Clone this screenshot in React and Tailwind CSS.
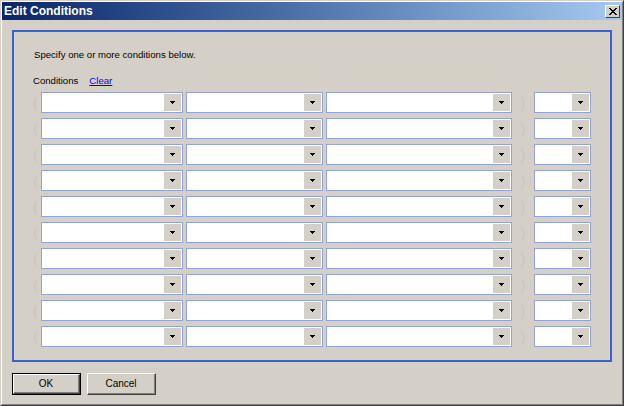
import React from "react";

const font = { fontFamily: '"Liberation Sans", Arial, sans-serif' };

function Arrow() {
  return (
    <svg width="5" height="3" viewBox="0 0 5 3" shapeRendering="crispEdges">
      <rect x="0" y="0" width="5" height="1" fill="#000" />
      <rect x="1" y="1" width="3" height="1" fill="#000" />
      <rect x="2" y="2" width="1" height="1" fill="#000" />
    </svg>
  );
}

function Combo({ w }) {
  return (
    <div className={`${w} h-[21px] border border-[#93a3d3] bg-white flex justify-end p-[1px]`}>
      <div className="w-[17px] h-full bg-[#d4d0c8] flex items-center justify-center">
        <Arrow />
      </div>
    </div>
  );
}

function Row() {
  return (
    <div className="flex items-center h-[21px]">
      <span className="w-[27px] pr-[3px] text-right text-[14px] leading-none text-[#c9c5bd]">(</span>
      <Combo w="w-[142px]" />
      <div className="w-[3px]" />
      <Combo w="w-[137px]" />
      <div className="w-[3px]" />
      <Combo w="w-[186px]" />
      <span className="w-[22px] text-center text-[14px] leading-none text-[#c9c5bd]">)</span>
      <Combo w="w-[57px]" />
    </div>
  );
}

function Button({ label, isDefault }) {
  return (
    <div className={`w-[69px] h-[22px] ${isDefault ? "border border-black" : ""}`}>
      <div className="w-full h-full border-t border-l border-t-white border-l-white border-r border-b border-r-[#404040] border-b-[#404040]">
        <div className="w-full h-full border-r border-b border-r-[#808080] border-b-[#808080] flex items-center justify-center text-[10px] text-black">
          {label}
        </div>
      </div>
    </div>
  );
}

export default function App() {
  const rows = Array.from({ length: 10 });
  return (
    <div
      style={font}
      className="w-[624px] h-[406px] bg-[#d4d0c8] border border-t-[#d4d0c8] border-l-[#d4d0c8] border-r-[#404040] border-b-[#404040] overflow-hidden"
    >
      <div className="w-full h-full border border-t-white border-l-white border-r-[#808080] border-b-[#808080] flex flex-col">
        <div className="h-[18px] flex items-center justify-between bg-gradient-to-r from-[#0a246a] to-[#a6caf0]">
          <span className="pl-[2px] text-[12px] font-bold text-white leading-none">Edit Conditions</span>
          <div className="mr-[2px] w-[15px] h-[13px] bg-[#d4d0c8] border border-t-white border-l-white border-r-[#404040] border-b-[#404040] flex items-center justify-center">
            <svg width="8" height="7" viewBox="0 0 8 7" shapeRendering="crispEdges">
              <path d="M0 0h2v1h-2zM6 0h2v1h-2zM1 1h2v1h-2zM5 1h2v1h-2zM2 2h4v1h-4zM3 3h2v1h-2zM2 4h4v1h-4zM1 5h2v1h-2zM5 5h2v1h-2zM0 6h2v1h-2zM6 6h2v1h-2z" fill="#000" />
            </svg>
          </div>
        </div>

        <div className="ml-[10px] mt-[10px] w-[600px] h-[332px] border-2 border-[#3f5fd0] flex flex-col">
          <div className="pt-[16px] pl-[20px] text-[9.6px] leading-[13px] text-black">
            Specify one or more conditions below.
          </div>
          <div className="mt-[13px] pl-[19px] flex text-[9.6px] leading-[13px] text-black">
            <span>Conditions</span>
            <span className="ml-[11px] text-[#0000ff] underline">Clear</span>
          </div>
          <div className="mt-[5px] flex flex-col gap-[5px]">
            {rows.map((_, i) => (
              <Row key={i} />
            ))}
          </div>
        </div>

        <div className="mt-[11px] ml-[10px] flex gap-[6px]">
          <Button label="OK" isDefault />
          <Button label="Cancel" />
        </div>
      </div>
    </div>
  );
}
